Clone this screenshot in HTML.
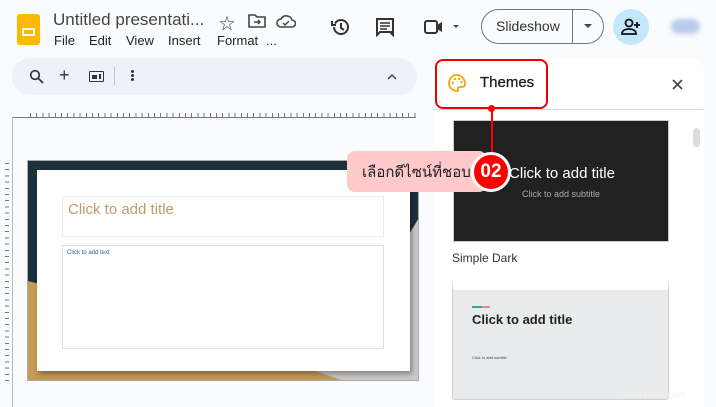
<!DOCTYPE html>
<html><head><meta charset="utf-8"><style>
*{box-sizing:border-box;margin:0;padding:0}
body{width:716px;height:407px;overflow:hidden;background:#f9fbfd;font-family:"Liberation Sans","Noto Sans CJK SC",sans-serif;position:relative;color:#1f1f1f}
.a{position:absolute}
svg{position:absolute}
</style></head><body>
<div class="a" style="left:17px;top:14px;width:23px;height:31px;background:#fbb900;border-radius:3px"></div>
<div class="a" style="left:22px;top:28px;width:13px;height:8px;border:2px solid #fff"></div>
<div class="a" style="left:53px;top:10px;font-size:17px;color:#444">Untitled presentati...</div>
<div class="a" style="left:54px;top:33px;font-size:13px;color:#222;word-spacing:0">
<span class="a" style="left:0">File</span><span class="a" style="left:35px">Edit</span><span class="a" style="left:72px">View</span><span class="a" style="left:114px">Insert</span><span class="a" style="left:163px">Format</span><span class="a" style="left:212px">...</span></div>
<div class="a" style="left:219px;top:10px;font-size:16px;color:#444">☆</div>
<svg style="left:248px;top:13px" width="18" height="16" viewBox="0 0 18 16"><path d="M1 2h6l2 2h8v10H1z" fill="none" stroke="#444" stroke-width="1.6"/><path d="M6 9h6M10 7l2 2-2 2" fill="none" stroke="#444" stroke-width="1.4"/></svg>
<svg style="left:276px;top:14px" width="20" height="14" viewBox="0 0 20 14"><path d="M5 13a4 4 0 010-8 6 6 0 0111 1 3.5 3.5 0 010 7z" fill="none" stroke="#444" stroke-width="1.6"/><path d="M7 9l2 2 4-4" fill="none" stroke="#444" stroke-width="1.4"/></svg>
<svg style="left:330px;top:17px" width="20" height="20" viewBox="0 0 20 20"><path d="M4 10a7 7 0 107-7 7 7 0 00-6 3.5" fill="none" stroke="#333" stroke-width="2"/><path d="M2 4v4h4" fill="none" stroke="#333" stroke-width="2"/><path d="M11 6v5l3 2" fill="none" stroke="#333" stroke-width="2"/></svg>
<svg style="left:375px;top:17px" width="20" height="20" viewBox="0 0 20 20"><path d="M2 2h16v13H5l-3 3z M18 15v3l-3-3" fill="none" stroke="#333" stroke-width="2"/><path d="M5 6h10M5 9h10M5 12h7" stroke="#333" stroke-width="1.6"/></svg>
<svg style="left:424px;top:19px" width="36" height="16" viewBox="0 0 36 16"><rect x="1" y="2" width="12" height="12" rx="2" fill="none" stroke="#333" stroke-width="2"/><path d="M13 6l5-3v10l-5-3z" fill="#333"/><path d="M29 6h6l-3 3z" fill="#444"/></svg>
<div class="a" style="left:481px;top:9px;width:123px;height:35px;border:1px solid #747775;border-radius:18px"></div>
<div class="a" style="left:572px;top:9px;width:1px;height:35px;background:#747775"></div>
<div class="a" style="left:496px;top:18px;font-size:14px;color:#333">Slideshow</div>
<svg style="left:584px;top:24px" width="8" height="5"><path d="M0 0h8L4 4z" fill="#444"/></svg>
<div class="a" style="left:613px;top:9px;width:36px;height:36px;border-radius:50%;background:#c2e7ff"></div>
<svg style="left:621px;top:18px" width="20" height="18" viewBox="0 0 20 18"><circle cx="8" cy="5" r="3.5" fill="none" stroke="#111" stroke-width="1.8"/><path d="M1 16c0-4 4-5 7-5s7 1 7 5z" fill="none" stroke="#111" stroke-width="1.8"/><path d="M16 4v6M13 7h6" stroke="#111" stroke-width="1.8"/></svg>
<div class="a" style="left:671px;top:19px;width:29px;height:15px;border-radius:8px;background:#b9cdea;filter:blur(2px)"></div>
<div class="a" style="left:12px;top:58px;width:405px;height:37px;background:#edf2fa;border-radius:18px"></div>
<svg style="left:29px;top:69px" width="15" height="15" viewBox="0 0 15 15"><circle cx="6" cy="6" r="4.3" fill="none" stroke="#333" stroke-width="1.7"/><path d="M9 9l5 5" stroke="#333" stroke-width="1.8"/></svg>
<div class="a" style="left:59px;top:65px;font-size:18px;color:#333">+</div>
<div class="a" style="left:89px;top:71px;width:15px;height:11px;border:1.7px solid #333;border-radius:1px"></div>
<div class="a" style="left:92px;top:75px;width:5px;height:1.5px;background:#333;box-shadow:0 2px 0 #333"></div>
<div class="a" style="left:99px;top:74px;width:2px;height:5px;background:#333"></div>
<div class="a" style="left:114px;top:67px;width:1px;height:18px;background:#c4c7c5"></div>
<div class="a" style="left:131px;top:70px;width:3px;height:3px;background:#333;border-radius:50%;box-shadow:0 4px 0 #333,0 8px 0 #333"></div>
<svg style="left:387px;top:73px" width="10" height="7"><path d="M1 6l4-4 4 4" fill="none" stroke="#444" stroke-width="1.5"/></svg>
<div class="a" style="left:12px;top:117px;width:404px;height:1px;background:#777"></div>
<div class="a" style="left:30px;top:113px;width:386px;height:4px;background:repeating-linear-gradient(90deg,#777 0 1px,transparent 1px 6.2px)"></div>
<div class="a" style="left:12px;top:117px;width:1px;height:290px;background:#bbb"></div>
<div class="a" style="left:5px;top:163px;width:4px;height:218px;background:repeating-linear-gradient(180deg,#777 0 1px,transparent 1px 6.2px)"></div>
<div class="a" style="left:27px;top:160px;width:392px;height:221px;background:#c9c9c9;border:1px solid #aaa;overflow:hidden">
<svg style="left:0;top:0" width="392" height="221"><path d="M0 0h392v55L380 75V10H0z" fill="#1e313b"/><path d="M0 0h10v221H0z" fill="#1e313b"/><path d="M0 120l60 15 260 86H0z" fill="#c49b55"/></svg>
</div>
<div class="a" style="left:37px;top:170px;width:373px;height:201px;background:#fff;box-shadow:2px 3px 5px rgba(0,0,0,.35)"></div>
<div class="a" style="left:62px;top:196px;width:322px;height:41px;border:1px solid #f1e9e3"></div>
<div class="a" style="left:68px;top:201px;font-size:15px;color:#c19a6b">Click to add title</div>
<div class="a" style="left:62px;top:245px;width:322px;height:104px;border:1px solid #dde0e0"></div>
<div class="a" style="left:67px;top:250px;font-size:6px;color:#39607a">Click to add text</div>
<div class="a" style="left:433px;top:58px;width:271px;height:349px;background:#fff;border-radius:12px 12px 0 0"></div>
<div class="a" style="left:433px;top:109px;width:270px;height:1px;background:#dadce0"></div>
<div class="a" style="left:435px;top:59px;width:113px;height:50px;border:2px solid #f00000;border-radius:8px"></div>
<svg style="left:447px;top:73px" width="20" height="20" viewBox="0 0 20 20"><path d="M10 2a8 8 0 000 16c1.5 0 1.5-1.2 1-2s0-2 1.5-2H15a3 3 0 003-3c0-5-4-9-8-9z" fill="none" stroke="#f6a400" stroke-width="1.8"/><circle cx="6" cy="10" r="1.2" fill="#f6a400"/><circle cx="8" cy="6" r="1.2" fill="#f6a400"/><circle cx="12" cy="6" r="1.2" fill="#f6a400"/><circle cx="14.5" cy="9" r="1.2" fill="#f6a400"/></svg>
<div class="a" style="left:480px;top:74px;font-size:15px;color:#1f1f1f;-webkit-text-stroke:0.3px #1f1f1f">Themes</div>
<svg style="left:672px;top:79px" width="11" height="11"><path d="M1 1l9 9M10 1l-9 9" stroke="#444" stroke-width="1.6"/></svg>
<div class="a" style="left:453px;top:120px;width:216px;height:122px;background:#212121;border:1px solid #ccc"></div>
<div class="a" style="left:453px;top:165px;width:216px;text-align:center;font-size:15px;color:#fff;padding-left:2px">Click to add title</div>
<div class="a" style="left:453px;top:189px;width:216px;text-align:center;font-size:9px;color:#aaa">Click to add subtitle</div>
<div class="a" style="left:452px;top:251px;font-size:12px;color:#333">Simple Dark</div>
<div class="a" style="left:452px;top:278px;width:217px;height:122px;background:#e8eaeb;border:1px solid #d0d0d0;border-top:12px solid #fff;border-radius:3px"></div>
<div class="a" style="left:472px;top:306px;width:10px;height:1.5px;background:#3aa"></div>
<div class="a" style="left:482px;top:306px;width:8px;height:1.5px;background:#e87"></div>
<div class="a" style="left:472px;top:312px;font-size:13px;font-weight:bold;color:#222">Click to add title</div>
<div class="a" style="left:472px;top:355px;font-size:4px;color:#444">Click to add subtitle</div>
<div class="a" style="left:704px;top:110px;width:12px;height:297px;background:#f9fbfd"></div>
<div class="a" style="left:693px;top:128px;width:7px;height:19px;background:#dadce0;border-radius:4px"></div>
<div class="a" style="left:491px;top:108px;width:2px;height:45px;background:#f00"></div>
<div class="a" style="left:488px;top:105px;width:7px;height:7px;border-radius:50%;background:#f00"></div>
<div class="a" style="left:347px;top:151px;width:140px;height:41px;background:#ffc9cc;border-radius:8px"></div>
<div class="a" style="left:362px;top:160px;font-size:15px;color:#222">เลือกดีไซน์ที่ชอบ</div>
<div class="a" style="left:471px;top:152px;width:40px;height:40px;border-radius:50%;background:#f00;border:3px solid #fff;color:#fff;font-weight:bold;font-size:19px;text-align:center;line-height:34px">02</div>
<div class="a" style="left:623px;top:390px;font-size:10px;color:#f2f2f2">bostatom.com</div>
</body></html>
